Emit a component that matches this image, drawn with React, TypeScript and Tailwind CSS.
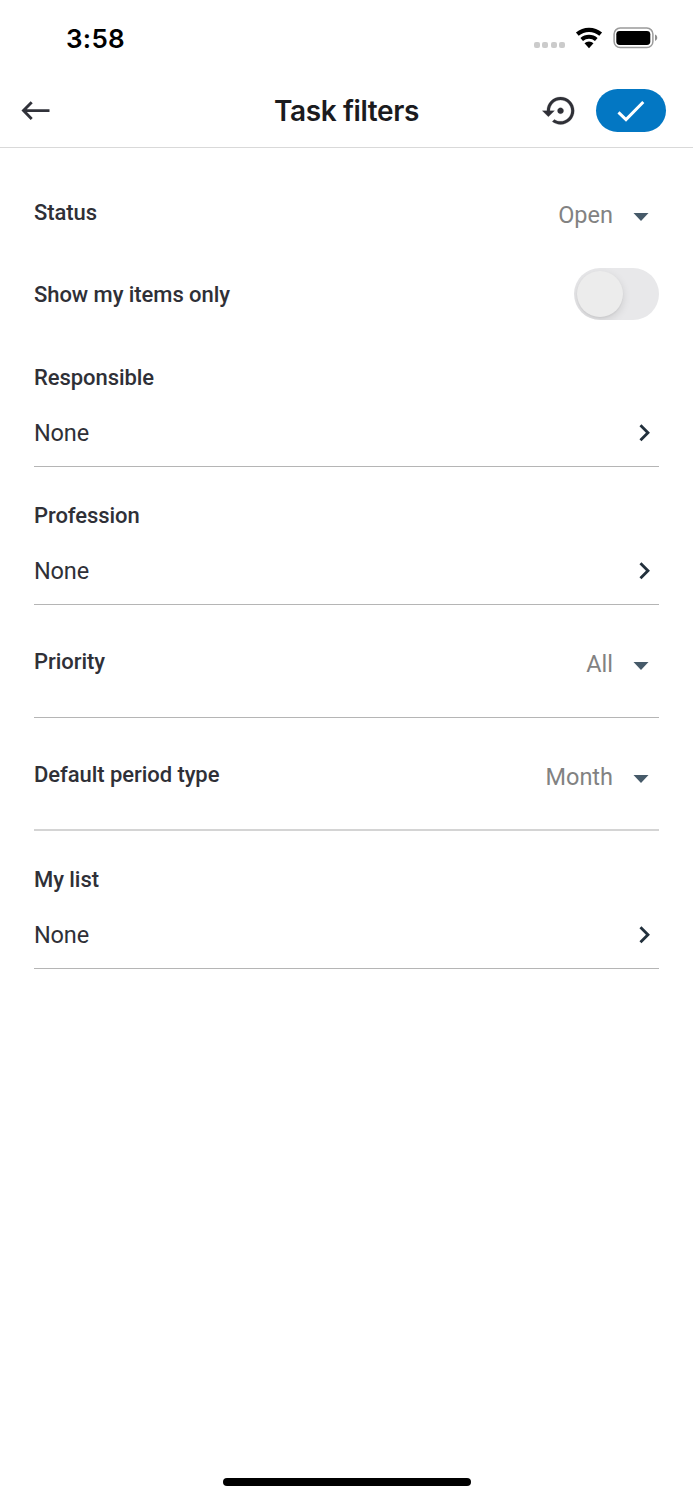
import { useState } from "react";
import * as Switch from "@radix-ui/react-switch";

interface PickerFieldProps {
  label: string;
  value: string;
}

interface DropdownFieldProps {
  label: string;
  value: string;
  className?: string;
}

const labelClass =
  "text-[22px] leading-[33px] font-medium tracking-[-0.06px] text-[#2f3037]";

const StatusBar = () => (
  <div className="flex h-[74px] items-start justify-between pl-[66px] pr-[35px] pt-[22px]">
    <span className="font-[Inter] text-[26px] font-semibold leading-[33px] tracking-[0.3px] text-black">
      3:58
    </span>
    <div className="flex items-center pt-[5px]">
      <div className="mt-[14px] flex gap-[2.4px]">
        <i className="size-[6px] rounded-[2px] bg-[#cbcbcb]" />
        <i className="size-[6px] rounded-[2px] bg-[#cbcbcb]" />
        <i className="size-[6px] rounded-[2px] bg-[#cbcbcb]" />
        <i className="size-[6px] rounded-[2px] bg-[#cbcbcb]" />
      </div>
      <svg className="ml-[10px]" width="28" height="22" viewBox="0 0 28 22">
        <path d="M2.3 7.1A18 18 0 0 1 25.7 7.1" fill="none" stroke="#000" strokeWidth="4.2" />
        <path d="M6.7 12.4A11.2 11.2 0 0 1 21.3 12.4" fill="none" stroke="#000" strokeWidth="4" />
        <path d="M14 21.2L9.5 16.3A6.8 6.8 0 0 1 18.5 16.3z" fill="#000" />
      </svg>
      <svg className="ml-[10px]" width="45" height="22" viewBox="0 0 45 22">
        <rect x="1.1" y="1.1" width="38.8" height="19.4" rx="6" fill="none" stroke="#9b9b9b" strokeWidth="1.5" />
        <rect x="3.3" y="3.9" width="34" height="14" rx="3.4" fill="#000" />
        <path d="M42 7.6c3 1.2 3 5.2 0 6.4z" fill="#8f8f8f" />
      </svg>
    </div>
  </div>
);

const Header = () => (
  <header className="grid h-[74px] grid-cols-[1fr_auto_1fr] items-center border-b border-[#d9d9d9] px-[27px]">
    <button aria-label="Back" className="-ml-[6px] w-[30px]">
      <svg width="30" height="20" viewBox="0 0 30 20" fill="none" stroke="#31323a" strokeWidth="2.9">
        <path d="M28.5 9.6H3M10.7 1.2L2.5 9.6l8.2 8.3" />
      </svg>
    </button>
    <h1 className="pt-px font-[Inter] text-[28px] font-semibold leading-9 tracking-[-0.4px] text-[#1b1b1e]">
      Task filters
    </h1>
    <div className="flex items-center justify-end gap-[17.5px]">
      <button aria-label="Reset filters">
        <svg
          width="36.5"
          height="36.5"
          viewBox="-0.2 -0.3 24 24"
          fill="#2f3037"
          stroke="#2f3037"
          strokeWidth="0.15"
        >
          <path d="M14 12c0-1.1-.9-2-2-2s-2 .9-2 2 .9 2 2 2 2-.9 2-2zm-2-9c-4.97 0-9 4.03-9 9H0l4 4 4-4H5c0-3.87 3.13-7 7-7s7 3.13 7 7-3.13 7-7 7c-1.51 0-2.91-.49-4.06-1.3l-1.42 1.44C8.04 20.3 9.94 21 12 21c4.97 0 9-4.03 9-9s-4.03-9-9-9z" />
        </svg>
      </button>
      <button
        aria-label="Apply"
        className="flex h-[43.5px] w-[70px] items-center justify-center rounded-full bg-[#0377c3]"
      >
        <svg width="28" height="22" viewBox="0 0 28 22" fill="none" stroke="#fff" strokeWidth="3">
          <path d="M1.5 12.4l7.5 7.2L26.3 2" />
        </svg>
      </button>
    </div>
  </header>
);

const DropdownField = ({ label, value, className = "" }: DropdownFieldProps) => (
  <div className={`flex items-center justify-between pr-[10px] ${className}`}>
    <span className={labelClass}>{label}</span>
    <button className="flex items-center gap-5 pt-[5px]">
      <span className="text-[23.5px] leading-[33px] text-[#828282]">{value}</span>
      <svg className="mt-[3px]" width="16" height="8" viewBox="0 0 16 8" fill="#465a69">
        <path d="M.5 0h15L8 8z" />
      </svg>
    </button>
  </div>
);

const PickerField = ({ label, value }: PickerFieldProps) => (
  <div className="h-[138px] border-b border-[#b5b5b5] pt-8">
    <div className={labelClass}>{label}</div>
    <button className="mt-[6px] flex h-[66px] w-full items-center justify-between">
      <span className="text-[23.5px] leading-[33px] tracking-[-0.15px] text-[#2f3037]">{value}</span>
      <svg className="-mr-[2px]" width="34" height="34" viewBox="-0.2 0.2 24 24" fill="#22303c">
        <path d="M10 6L8.59 7.41 13.17 12l-4.58 4.59L10 18l6-6z" />
      </svg>
    </button>
  </div>
);

export default function App() {
  const [mineOnly, setMineOnly] = useState(false);

  return (
    <div className="flex h-[1500px] w-[693px] flex-col bg-white font-[Roboto,sans-serif]">
      <StatusBar />
      <Header />

      <main className="flex-1 px-[34px] pt-[18px]">
        <DropdownField label="Status" value="Open" className="h-[93px]" />

        <div className="flex h-[70px] items-center justify-between">
          <span className={labelClass}>Show my items only</span>
          <Switch.Root
            checked={mineOnly}
            onCheckedChange={setMineOnly}
            className="h-[52px] w-[85px] overflow-hidden rounded-full bg-[#e8e8ea] p-[3px]"
          >
            <Switch.Thumb className="block size-[46px] rounded-full bg-[#ececec] shadow-[0_3px_8px_rgba(0,0,0,0.12),0_1px_2px_rgba(0,0,0,0.05)] data-[state=checked]:translate-x-[33px]" />
          </Switch.Root>
        </div>

        <PickerField label="Responsible" value="None" />
        <PickerField label="Profession" value="None" />
        <DropdownField
          label="Priority"
          value="All"
          className="h-[113px] border-b border-[#b5b5b5] pt-px"
        />
        <DropdownField
          label="Default period type"
          value="Month"
          className="h-[113px] border-b-2 border-[#d4d4d4] pt-[2px]"
        />
        <PickerField label="My list" value="None" />
      </main>

      {/* Home indicator */}
      <div className="mb-[14px] h-2 w-[248px] self-center rounded-full bg-black" />
    </div>
  );
}
